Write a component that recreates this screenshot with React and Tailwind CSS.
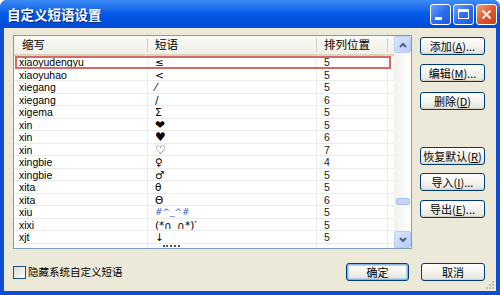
import React from "react";

const rows = [
  ["xiaoyudengyu", "≤", "5"],
  ["xiaoyuhao", "<", "5"],
  ["xiegang", "⁄", "5"],
  ["xiegang", "/", "6"],
  ["xigema", "Σ", "5"],
  ["xin", "❤", "5"],
  ["xin", "♥", "6"],
  ["xin", "♡", "7"],
  ["xingbie", "♀", "4"],
  ["xingbie", "♂", "5"],
  ["xita", "θ", "5"],
  ["xita", "Θ", "6"],
  ["xiu", "#^_^#", "5"],
  ["xixi", "(*∩_∩*)′", "5"],
  ["xjt", "↓", "5"],
];

const font = { fontFamily: '"Liberation Sans", "Noto Sans CJK SC", "DejaVu Sans", sans-serif' };

const XpButton = ({ label, hot, tail, def, className = "" }) => (
  <div
    className={`h-[18px] flex items-center justify-center rounded-[3px] border border-[#003C74] bg-linear-to-b from-white via-[#F5F4EF] to-[#E3E2DA] text-[11px] text-black leading-none ${
      def ? "shadow-[inset_0_0_0_1px_#8DB2E3,inset_0_0_0_2px_#B9D1EA]" : "shadow-[inset_0_-1px_0_#D6D0C5]"
    } ${className}`}
  >
    <span>
      {label}
      {hot && (
        <>
          (<span className="underline">{hot}</span>)
        </>
      )}
      {tail}
    </span>
  </div>
);

const TitleBtn = ({ children, close }) => (
  <div
    className={`w-[21px] h-[21px] rounded-[3px] border border-white flex items-center justify-center ${
      close
        ? "bg-linear-to-br from-[#F0A080] via-[#E0582E] to-[#C4401C]"
        : "bg-linear-to-br from-[#6FA2FF] via-[#2F6EF0] to-[#1E57D8]"
    }`}
  >
    {children}
  </div>
);

const App = () => {
  return (
    <div className="w-[500px] h-[295px] flex flex-col bg-[#0A4FD6] rounded-t-[7px] overflow-hidden" style={font}>
      {/* title bar */}
      <div className="h-[28px] flex items-center pl-[7px] pr-[3px] bg-linear-to-b from-[#3F8CF5] via-[#0058E6] to-[#004BD4]">
        <span className="text-white font-bold text-[13.5px] [text-shadow:1px_1px_0_#0A2A80]" style={{ fontFamily: '"Noto Sans CJK SC", sans-serif' }}>
          自定义短语设置
        </span>
        <div className="ml-auto flex gap-[2px]">
          <TitleBtn>
            <div className="w-[7px] h-[3px] bg-white mt-[8px] -ml-[5px]" />
          </TitleBtn>
          <TitleBtn>
            <div className="w-[11px] h-[10px] border border-white border-t-[3px]" />
          </TitleBtn>
          <TitleBtn close>
            <svg width="11" height="11" viewBox="0 0 11 11">
              <path d="M1.5 1.5 L9.5 9.5 M9.5 1.5 L1.5 9.5" stroke="white" strokeWidth="2" />
            </svg>
          </TitleBtn>
        </div>
      </div>

      {/* body */}
      <div className="relative flex-1 mx-[4px] mb-[4px] bg-[#ECE9D8] pt-[7px] pl-[9px] pr-[11px] flex flex-col">
        <div className="flex">
          {/* list */}
          <div className="w-[399px] h-[214px] border border-[#7F9DB9] bg-white flex overflow-hidden">
            <div className="w-[380px] flex flex-col">
              <div className="h-[20px] shrink-0 flex items-center bg-linear-to-b from-[#FAFAF7] to-[#F1EFE6] border-b-2 border-[#D9D5C5] text-[11.5px] text-black" style={{ fontFamily: '"Noto Sans CJK SC", sans-serif' }}>
                <div className="w-[134px] pl-[8px] border-r border-[#D5D1C2] h-[14px] flex items-center">缩写</div>
                <div className="w-[169px] pl-[7px] border-r border-[#D5D1C2] h-[14px] flex items-center">短语</div>
                <div className="w-[71px] pl-[7px] border-r border-[#D5D1C2] h-[14px] flex items-center">排列位置</div>
              </div>
              <div className="flex-1 overflow-hidden">
                {rows.map((r, i) => (
                  <div key={i} className="relative h-[12.5px] flex border-b border-[#EBEBEB] text-[10.5px] leading-[12px] text-black">
                    <div className="w-[134px] pl-[5px] border-r border-[#EBEBEB] whitespace-nowrap">{r[0]}</div>
                    <div
                      className={`w-[169px] pl-[7px] border-r border-[#EBEBEB] whitespace-nowrap overflow-hidden ${
                        i === 12 ? "text-[#3A66C8] text-[9px]" : ""
                      } ${i >= 5 && i <= 7 ? "text-[12px] leading-[12px]" : ""}`}
                      style={{ fontFamily: '"DejaVu Sans", "Noto Sans CJK SC", sans-serif' }}
                    >
                      {r[1]}
                    </div>
                    <div className="w-[71px] pl-[7px] border-r border-[#EBEBEB] text-[#222]">{r[2]}</div>
                    {i === 0 && (
                      <span className="absolute left-[1px] right-[3px] top-0 -bottom-[1px] border-2 border-[#D46A63]" />
                    )}
                  </div>
                ))}
                <div className="h-[12.5px] flex">
                  <div className="w-[134px] border-r border-[#EBEBEB]" />
                  <div className="w-[169px] pl-[15px] border-r border-[#EBEBEB] pt-[1px]">
                    <div className="w-[17px] h-[3px] border-t-2 border-[#555] border-dotted" />
                  </div>
                  <div className="w-[71px] border-r border-[#EBEBEB]" />
                </div>
              </div>
            </div>
            {/* scrollbar */}
            <div className="ml-auto w-[17px] flex flex-col bg-linear-to-r from-[#F3F1EC] to-[#FEFEFB]">
              <div className="h-[17px] rounded-[2px] border border-[#B8CCF2] bg-linear-to-br from-[#DCE6FD] to-[#B8CDF8] flex items-center justify-center">
                <svg width="8" height="6" viewBox="0 0 8 6">
                  <path d="M1 5 L4 2 L7 5" stroke="#4D6185" strokeWidth="2" fill="none" />
                </svg>
              </div>
              <div className="flex-1 flex flex-col items-center">
                <div className="mt-[145px] w-[14px] h-[7px] rounded-[2px] border border-[#A8BEEB] bg-[#C7D6F8]" />
              </div>
              <div className="h-[17px] rounded-[2px] border border-[#B8CCF2] bg-linear-to-br from-[#DCE6FD] to-[#B8CDF8] flex items-center justify-center">
                <svg width="8" height="6" viewBox="0 0 8 6">
                  <path d="M1 1 L4 4 L7 1" stroke="#4D6185" strokeWidth="2" fill="none" />
                </svg>
              </div>
            </div>
          </div>

          {/* side buttons */}
          <div className="ml-[8px] w-[65px] flex flex-col" style={{ fontFamily: '"Noto Sans CJK SC", sans-serif' }}>
            <XpButton className="mt-[2px]" label="添加" hot="A" tail="..." />
            <XpButton className="mt-[9px]" label="编辑" hot="M" tail="..." />
            <XpButton className="mt-[10px]" label="删除" hot="D" />
            <XpButton className="mt-[37px]" label="恢复默认" hot="R" />
            <XpButton className="mt-[8px]" label="导入" hot="I" tail="..." />
            <XpButton className="mt-[9px]" label="导出" hot="E" tail="..." />
          </div>
        </div>

        {/* bottom row */}
        <div className="mt-[14px] h-[18px] flex items-center" style={{ fontFamily: '"Noto Sans CJK SC", sans-serif' }}>
          <div className="w-[13px] h-[13px] border border-[#1C5180] bg-linear-to-br from-[#DCDBD5] to-white" />
          <span className="ml-[2px] text-[10.5px] text-black">隐藏系统自定义短语</span>
          <XpButton className="ml-auto w-[63px]" label="确定" def />
          <XpButton className="ml-[12px] w-[64px]" label="取消" />
        </div>

        <svg className="absolute right-[1px] bottom-[1px]" width="10" height="10" viewBox="0 0 10 10">
          <rect x="7" y="1" width="2" height="2" fill="#C3BFB0" />
          <rect x="4" y="4" width="2" height="2" fill="#C3BFB0" />
          <rect x="7" y="4" width="2" height="2" fill="#C3BFB0" />
          <rect x="1" y="7" width="2" height="2" fill="#C3BFB0" />
          <rect x="4" y="7" width="2" height="2" fill="#C3BFB0" />
          <rect x="7" y="7" width="2" height="2" fill="#C3BFB0" />
        </svg>
      </div>
    </div>
  );
};

export default App;
